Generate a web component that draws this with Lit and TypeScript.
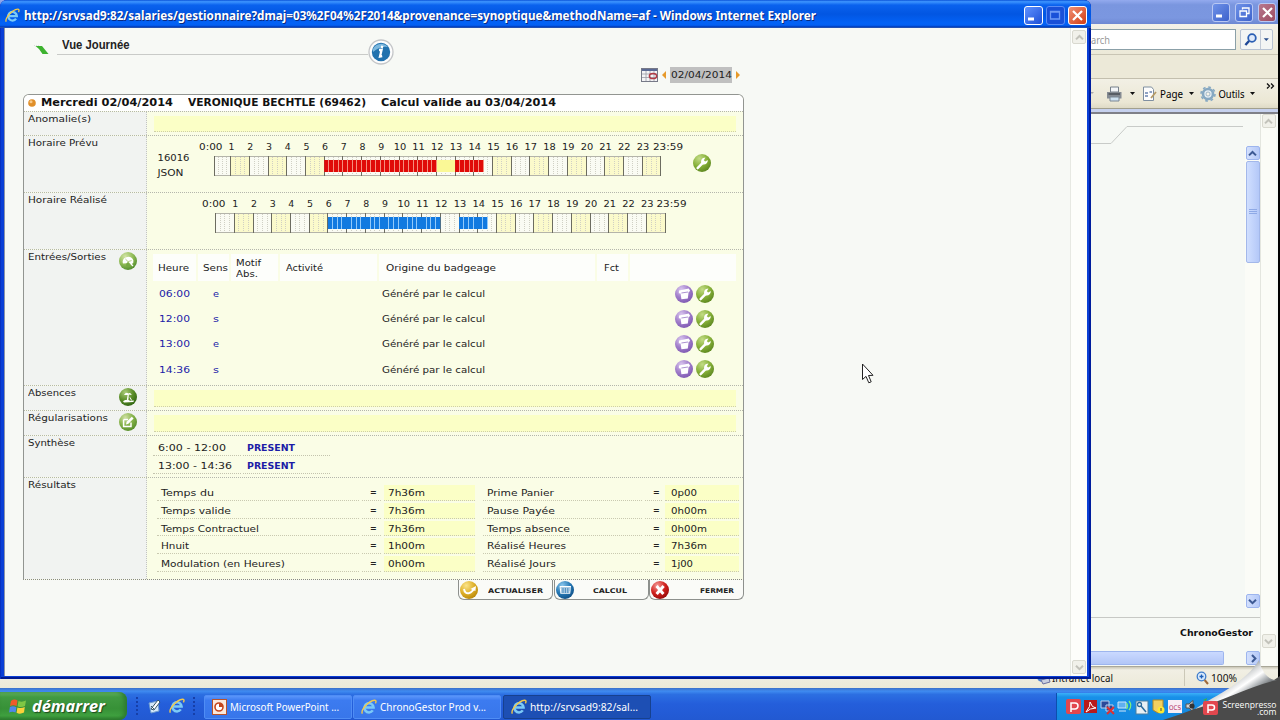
import { LitElement, html, svg, css } from "lit";
import { customElement, property } from "lit/decorators.js";

/* Text stretched horizontally so that it spans a given width. */
@customElement("fit-text")
class FitText extends LitElement {
  @property({ type: Number }) w = 0;
  @property() text = "";
  static styles = css`
    :host { display: inline-block; white-space: nowrap; }
    .t { display: inline-block; transform-origin: 0 50%; }
  `;
  render() {
    return html`<span class="t">${this.text}</span>`;
  }
  updated() {
    const el = this.renderRoot.querySelector(".t") as HTMLElement;
    el.style.transform = "none";
    const natural = el.getBoundingClientRect().width;
    el.style.transform = `scaleX(${(this.w / natural).toFixed(4)})`;
    this.style.width = this.w + "px";
  }
}

const fit = (text: string, w: number, cls = "") =>
  html`<fit-text class=${cls} .text=${text} .w=${w}></fit-text>`;

const ball = (id: string, a: string, b: string, c: string) => svg`
  <defs><radialGradient id=${id} cx="0.35" cy="0.25" r="0.8">
    <stop offset="0" stop-color=${a}/><stop offset="0.55" stop-color=${b}/><stop offset="1" stop-color=${c}/>
  </radialGradient></defs>
  <circle cx="9" cy="9" r="9" fill=${`url(#${id})`}/>`;

const wrench = svg`${ball("gw", "#c3dc86", "#86b038", "#5c8620")}
  <path d="M4.6 14.2 L10 8.6" stroke="#fff" stroke-width="2.4" fill="none" stroke-linecap="round"/>
  <path d="M8.4 9.4 C7.4 6.6 9 3.6 12.4 3.6 L10.8 6.2 L12.2 7.6 L14.8 6 C15 9 12.6 11 9.6 10.4Z" fill="#fff"/>`;
const trash = svg`${ball("pt", "#d9c6ee", "#a07cca", "#7e58b2")}
  <path d="M4 5.400 L13.800 3.600 L15.200 6 L13.600 7 L12.800 13.600 L6.400 14.200 L5.600 8.600 L3.800 8.200Z" fill="#fff"/>
  <path d="M6.400 8 L13 7" stroke="#a184cc" stroke-width="0.9"/>`;
const clock = svg`${ball("gc", "#d3e4a6", "#8fbb55", "#4e8a2a")}
  <path d="M3.600 10 A5.600 5.600 0 0 1 14.400 8.400 L14.200 11 L12 12.600 L9 9.600 L7.600 11.200 L4 11.600Z" fill="#fff"/>
  <path d="M6.400 7 L9 9.600 L12.600 8.600" stroke="#b6d088" stroke-width="1" fill="none"/>
  <path d="M7.400 11.400 L9.200 10.400 L12 14.600 Q9 15.600 7 14Z" fill="#76a844"/><path d="M12 12 L14 14" stroke="#fff" stroke-width="1.200"/>`;
const palm = svg`${ball("gp", "#a9cb77", "#5b8d29", "#2f6412")}
  <path d="M5 7 Q7 3.6 9.4 5.4 Q11.4 4.2 12.8 7 L9.8 6.6 L9.4 12 L7.8 12 L8.6 7Z M4 13.2 Q8 10.6 11 12.8 L15 12.4 L14.4 14 L5 14.4Z" fill="#fff"/>
  <path d="M11 9.4 L12.6 12.4" stroke="#fff" stroke-width="1"/>`;
const pencil = svg`${ball("ge", "#cfe0a2", "#85b249", "#548c28")}
  <path d="M4.6 6.4 H9 M4.6 6.4 V13.6 H12 V9.6" stroke="#fff" stroke-width="1.5" fill="none"/>
  <path d="M7 11.4 L7.6 8.8 L12.8 3.8 L14.6 5.6 L9.4 10.8Z" fill="#fff"/>`;
const refresh = svg`${ball("yr", "#fbe48a", "#deb02a", "#b98708")}
  <path d="M4 8 Q4.800 13 9 12.200 Q12 11.400 14 7.600" stroke="#fff" stroke-width="1.900" fill="none"/>
  <path d="M10.400 8 L16 5 L15.400 10Z" fill="#fff"/>`;
const calc = svg`${ball("bc", "#8cc8ee", "#2678b4", "#0f4f86")}
  <path d="M3.600 5 H15 L14.200 12.800 H4.400Z" fill="#fff"/>
  <path d="M4.600 7 H14.400 M5 9 H14 M5 11 H13.600 M7 7 V12 M9.400 7 V12 M11.800 7 V12" stroke="#2e7cb6" stroke-width="0.8"/>`;
const cross = svg`${ball("rx", "#f49a96", "#d0201c", "#940a0a")}
  <path d="M5.600 5 L12.400 13 M12.600 5 L5.600 13" stroke="#fff" stroke-width="3"/>`;

const icon = (g: unknown, size = 18) =>
  html`<svg class="ic" width=${size} height=${size} viewBox="0 0 18 18">${g}</svg>`;

const ie = (s: number) => html`<svg class="ic" width=${s} height=${s} viewBox="0 0 16 16">
  <path d="M3.8 8.6 H12.6 A4.6 4.6 0 1 0 11.8 11.4" fill="none" stroke="#7ccaf7" stroke-width="2.5"/>
  <path d="M1.4 14.6 C-0.6 11.6 7 2 13.6 1.2 C15.4 1 15.2 3 14.4 4.4" fill="none" stroke="#f3c94b" stroke-width="1.4"/></svg>`;

const chevron = (d: string, color: string) =>
  html`<svg width="9" height="9" viewBox="0 0 9 9"><path d=${d} fill="none" stroke=${color} stroke-width="2"/></svg>`;
const UP = "M1 6.4 L4.5 3 L8 6.4", DOWN = "M1 2.8 L4.5 6.2 L8 2.8", RIGHT = "M3 1 L6.4 4.5 L3 8";

interface Scale { top: number; zero: number; one: number; step: number; plan: boolean; color: string; light: string; start: number; end: number; }

const snap = (v: number) => Math.floor(v) + 0.5;

const timeline = (s: Scale) => {
  const x = (h: number) => (h < 1 ? s.zero + (s.one - s.zero) * h : s.one + s.step * (h - 1));
  const y = s.top;
  const hours = Array.from({ length: 24 }, (_, i) => i);
  const block = (a: number, b: number) => svg`
    <rect x=${x(a)} y=${y + 4} width=${x(b) - x(a)} height="12" fill=${s.color}/>
    ${Array.from({ length: Math.floor((b - a) * 4) }, (_, i) => i + 1).filter((i) => s.plan || i % 4 !== 0)
      .map((i) => snap(x(a) + i * s.step / 4)).map((q) => svg`<line x1=${q} x2=${q} y1=${y + 4} y2=${y + 16} stroke=${s.light} stroke-width="1"/>`)}`;
  return svg`
    <rect x=${s.zero} y=${y} width=${x(24) - s.zero} height="19" fill="#fafbf3"/>
    ${hours.filter((h) => h % 2 === 1 && (h < 6 || h > 14)).map((h) => svg`<rect x=${x(h)} y=${y} width=${s.step} height="19" fill="#fbfacb"/>`)}
    ${hours.flatMap((h) => [1, 2, 3].map((q) => snap(x(h + q / 4)))).map((q) => svg`<line x1=${q} x2=${q} y1=${y + 1} y2=${y + 19} stroke="#d0d0c4" stroke-width="1" stroke-dasharray="1 1"/>`)}
    <path d=${`M${s.zero} ${y + 0.5} H${x(24)} M${s.zero} ${y + 19.5} H${x(24)}`} stroke="#b4b4aa" fill="none"/>
    ${[...hours, 24].map((h) => snap(x(h))).map((q) => svg`<line x1=${q} x2=${q} y1=${y} y2=${y + 20} stroke="#6c6c60" stroke-width="1"/>`)}
    ${s.plan ? svg`<rect x=${x(12)} y=${y + 4} width=${s.step} height="12" fill="#faf896"/>` : ""}
    ${block(6, 12)}${block(13, 14.5)}
    <text class="num" x=${s.start} y=${y - 6} textLength="23.5" lengthAdjust="spacingAndGlyphs">0:00</text>
    ${hours.slice(1).map((h) => svg`<text class="num mid" x=${x(h) + 0.9} y=${y - 6} textLength=${h > 9 ? 12.5 : 6} lengthAdjust="spacingAndGlyphs">${h}</text>`)}
    <text class="num" x=${s.end} y=${y - 6} textLength="30" lengthAdjust="spacingAndGlyphs">23:59</text>`;
};

const BADGES = [["06:00", "e"], ["12:00", "s"], ["13:00", "e"], ["14:36", "s"]];
const RESULTS: [string, number, string, number, string, number, string, number][] = [
  ["Temps du", 53, "7h36m", 37, "Prime Panier", 67, "0p00", 26],
  ["Temps valide", 70, "7h36m", 37, "Pause Payée", 68, "0h00m", 36],
  ["Temps Contractuel", 98, "7h36m", 37, "Temps absence", 83, "0h00m", 36],
  ["Hnuit", 28, "1h00m", 37, "Réalisé Heures", 79, "7h36m", 36],
  ["Modulation (en Heures)", 124, "0h00m", 37, "Réalisé Jours", 69, "1j00", 22],
];

@customElement("app-root")
class AppRoot extends LitElement {
  static styles = css`
    :host { display: block; position: relative; width: 1280px; height: 720px; overflow: hidden; background: #000;
      font-family: "DejaVu Sans", sans-serif; font-size: 9px; line-height: 12px; color: #222; }
    * { box-sizing: border-box; }
    svg { display: block; flex: none; }
    .row { display: flex; align-items: center; }
    .end { justify-content: flex-end; }
    .ui { font-family: "Noto Sans", sans-serif; }

    /* main browser window */
    .back { position: absolute; left: 0; top: 0; width: 1278px; height: 688px; background: #ece9d8; display: flex; flex-direction: column; }
    .btitle { height: 24px; background: linear-gradient(#93aaee, #7a96df 20%, #7b97e0 75%, #6d88d2); gap: 5px; padding-right: 2px; }
    .wb { width: 18px; height: 19px; border: 1px solid #b9c8f3; border-radius: 3px; background: linear-gradient(135deg, #6f92e8, #3d62cc); display: grid; place-items: center; }
    .wb.red { background: linear-gradient(135deg, #b8788e, #9c4c62); }
    .search { height: 31px; padding-right: 5px; gap: 4px; border-bottom: 1px solid #c9c5b4; background: linear-gradient(#f3f1e8, #ece9d8); }
    .field { width: 158px; height: 21px; background: #fff; border: 1px solid #8ba0a8; padding-left: 12px; font-size: 11px; line-height: 20px; color: #999; }
    .sbtn { width: 33px; height: 21px; border: 1px solid #b7c2d2; border-radius: 2px; background: #f3f5f4; }
    .sbtn svg + svg { border-left: 1px solid #c2cad6; }
    .tabs { height: 24px; border-bottom: 1px solid #c3bfae; }
    .cmd { height: 29px; padding-right: 2px; background: linear-gradient(#f2f0e5, #ebe7d4 80%, #dedac6); color: #111; font-size: 11px; }
    .rule { height: 6px; background: linear-gradient(#a2a08e 0 1px, #c6d1ee 1px 4px, #7f8088 4px); }
    .view { flex: 1; display: flex; justify-content: flex-end; background: #f6f9f5; padding-right: 2px; }
    .frame { width: 171px; display: flex; flex-direction: column; }
    .doc { flex: 1; display: flex; }
    .doc .page { flex: 1; }
    .vbar { width: 15px; background: #fbfcf7; display: flex; flex-direction: column; align-items: center; }
    .vbar.outer { border-left: 1px solid #e4e6df; width: 16px; }
    .inner { margin-top: 32px; }
    .sb { width: 14px; height: 14px; background: linear-gradient(90deg, #d3e0fd, #b5c9f8); border: 1px solid #9db5ee; border-radius: 2px; display: grid; place-items: center; flex: none; }
    .sb.off { background: #f1f1ea; border-color: #d9d9cf; }
    .thumb { width: 14px; height: 102px; margin-top: 1px; background: linear-gradient(90deg, #d0dfff, #b4c8f8); border: 1px solid #a3b8ea; border-radius: 2px; display: grid; place-items: center; }
    .grow { flex: 1; }
    .foot { height: 33px; border-top: 1px solid #c7c9c5; padding-right: 7px; justify-content: flex-end; font-weight: bold; font-size: 9.5px; color: #111; padding-bottom: 3px; }
    .hbar { height: 16px; }
    .hthumb { width: 135px; height: 14px; border: 1px solid #9db5ee; border-left: 0; border-radius: 0 2px 2px 0; background: linear-gradient(#cad9ff, #b2c6f7); }
    .status { height: 22px; background: linear-gradient(#c9c6b6, #f1efe4 3px, #ece9d8); border-top: 1px solid #a9a798; padding-left: 1036px; color: #111; font-size: 10.5px; }
    .status .sep { width: 1px; height: 17px; background: #cbc8b8; margin: 0 11px 0 71px; }
    .zoom { margin-left: 2px; }

    /* pop-up window */
    .front { position: absolute; left: 0; top: 0; width: 1091px; height: 679px; border-radius: 7px 7px 0 0; background: #0a3fd6; padding: 0 4px 3px 4px; display: flex; flex-direction: column; box-shadow: inset 1px 0 #0831c0, inset -2px 0 #001e9e, inset 0 -2px #001a90; overflow: hidden; }
    .title { height: 28px; margin: 0 -4px; padding: 3px 3px 0 5px; background: linear-gradient(#0b53d8, #3d95ff 6%, #0a62ee 18%, #0256e2 50%, #0362f6 82%, #0460f2 90%, #0037b4 97%, #5577b0); gap: 2px; color: #fff; font-weight: bold; font-size: 12px; text-shadow: 1px 1px 0 #0a2a80; }
    .title fit-text { margin-left: 2px; }
    .title .wb { border-color: #fff; width: 19px; background: linear-gradient(135deg, #5f92ff, #1d4fd6); margin: -1px 1px 0 0; }
    .title .wb.dim { border-color: #5a8cf5; background: #1950d8; }
    .title .wb.red { background: linear-gradient(135deg, #f09074, #d23c14); }
    .client { flex: 1; display: flex; background: #f7f9f5; border-left: 1px solid #8b95a8; }
    .popbar { width: 17px; border-left: 1px solid #e7e9e3; background: #fdfefb; display: flex; flex-direction: column; align-items: center; padding: 2px 0 2px; }
    .main { flex: 1; padding-left: 18px; }
    .head { display: flex; height: 38px; align-items: flex-start; padding-left: 6px; }
    .mark { margin: 17px 5px 0 5px; }
    .headline { width: 311px; height: 27px; margin-left: 3px; padding: 10px 0 0 5px; border-bottom: 1px solid #c9cbc8; font: bold 12px/14px "Liberation Sans", sans-serif; color: #222; }
    .info { margin-top: 11px; }
    .daterow { width: 719px; height: 17px; padding-right: 2px; margin-bottom: 11px; gap: 4px; }
    .date { background: #c0c0c0; height: 16px; width: 62px; padding: 2px 0 0 1px; }

    /* card */
    .card { width: 721px; }
    .panel { border: 1px solid #929591; border-radius: 6px 6px 0 0; height: 486px; border-bottom: 1px dotted #888; display: flex; flex-direction: column; background: #fafde6; overflow: hidden; }
    .ptitle { height: 16px; background: #fff; font-weight: bold; font-size: 10px; color: #111; padding-left: 4px; gap: 5px; }
    .ptitle .gap { margin-left: 10px; }
    .line { display: grid; grid-template-columns: 123px 1fr; border-top: 1px dotted #b4b6ac; }
    .label { background: #f1f3f1; border-right: 1px dotted #c3c5c0; padding: 0 9px 0 4px; display: flex; justify-content: space-between; align-items: flex-start; }
    .label fit-text { margin-top: 0.5px; }
    .label .ic { margin-top: 2px; }
    .h25 { height: 25px; } .h24 { height: 24px; } .h57 { height: 57px; } .h136 { height: 136px; } .h42 { height: 42px; }
    .fill { background: #fbffc6; border-bottom: 1px dotted #cfcfa8; margin: 4px 7px 3px 7px; }
    .num { font-size: 9px; fill: #222; } .mid { text-anchor: middle; }
    .es { padding: 4px 7px 0 6px; }
    .hd, .bd { display: grid; grid-template-columns: 43px 31px 47px 97px 216px 31px 1fr; column-gap: 2px; }
    .hd { height: 27px; }
    .hd > div { background: #fdfefb; display: flex; align-items: center; padding: 2px 0 0 5px; line-height: 11px; }
    .hd > .motif { flex-direction: column; justify-content: center; align-items: flex-start; }
    .hd > .act { padding-left: 6px; } .hd > .org { padding-left: 7px; } .hd > .fct { padding-left: 7px; }
    .bd { height: 25.2px; align-items: center; padding-left: 6px; color: #2222a8; }
    .bd fit-text { margin-top: 1px; }
    .bd .org { color: #222; margin-left: -3px; }
    .bd .sens { padding-left: 9px; }
    .acts { display: flex; gap: 3px; padding-left: 39px; }
    .syn { display: grid; grid-template-columns: 88px 87px; grid-auto-rows: 17px; row-gap: 1px; column-gap: 2px; padding: 3px 0 0 6px; align-content: start; }
    .syn > div { border-bottom: 1px dotted #c4c4ae; padding: 3px 0 0 5px; }
    .syn .p { font-weight: bold; color: #1c1ca6; padding-left: 4px; }
    .res { display: grid; grid-template-columns: 202px 19px 91px 164px 17px 74px; grid-auto-rows: 15.8px; row-gap: 2px; padding: 7px 0 0 10px; align-content: start; column-gap: 3px; }
    .res > div { border-bottom: 1px dotted #c9c9b0; padding: 2px 0 0 4px; }
    .res > .eq { padding-left: 8px; font-weight: bold; font-size: 8px; } .res > .val { background: #fbffc6; } .res > .b { margin-left: 5px; } .res > .v2 { padding-left: 6px; }
    .btns { display: flex; justify-content: flex-end; }
    .btn { width: 95px; height: 20px; border: 1px solid #8d908d; border-top: 0; border-radius: 0 0 6px 6px; display: flex; align-items: flex-start; background: #fafbf8; font-weight: bold; font-size: 6.5px; color: #222; margin-left: 0.5px; padding: 1px 9px 0 1px; justify-content: space-between; }
    .btn fit-text { margin-top: 4px; }
    .btn.c { padding-right: 21px; }

    /* taskbar */
    .task { position: absolute; left: 0; top: 688px; width: 1280px; height: 32px; background: linear-gradient(#3c6fc9, #3f8bf0 10%, #2c6fe2 20%, #245edb 50%, #2259d2); display: flex; align-items: flex-end; }
    .start { width: 127px; height: 28px; border-radius: 0 8px 8px 0; background: linear-gradient(#6cbb66, #419a41 18%, #379137 60%, #3fa03f 85%, #2b7a2b); color: #fff; font-family: "Open Sans", sans-serif; font-style: italic; font-weight: bold; font-size: 16.5px; gap: 4px; padding-left: 9px; text-shadow: 1px 1px 1px #1d4a1d; line-height: 20px; box-shadow: inset -3px 0 4px #2d7a30; }
    .start fit-text { margin-top: -1px; }
    .quick { width: 77px; height: 28px; padding-left: 9px; gap: 8px; }
    .dots { width: 3px; height: 18px; border-left: 2px dotted #163fa8; }
    .tb { width: 148px; height: 24px; margin: 0 1px 1px 0; border: 1px solid #4f8df5; border-radius: 2px; background: linear-gradient(#5a95fa, #3c7bf0 20%, #3876ea); color: #fff; padding-left: 7px; gap: 3px; font-size: 11px; }
    .tb.on { background: #1d4fb4; border-color: #17418f; margin-left: 1px; }
    .tray { width: 224px; height: 27px; margin-left: auto; background: linear-gradient(#3cb0f8, #1890e8 15%, #1288e0); border-left: 1px solid #0d4fae; padding-left: 9px; gap: 4px; }
    .curl { position: absolute; left: 1160px; top: 656px; }
    .cursor { position: absolute; left: 861px; top: 363px; }
    .sp { font: 9px "Open Sans", sans-serif; fill: #fff; }
    .sp.small { font-size: 8.5px; }
  `;

  row(h: string, label: string, w: number, body: unknown, ic: unknown = "") {
    return html`<div class="line ${h}"><div class="label">${fit(label, w)}${ic}</div>${body}</div>`;
  }

  render() {
    const min = html`<svg width="13" height="13" viewBox="0 0 13 13"><path d="M1 10 H7" stroke="#fff" stroke-width="3"/></svg>`;
    const x = html`<svg width="13" height="13" viewBox="0 0 13 13"><path d="M2 2 L11 11 M11 2 L2 11" stroke="#fff" stroke-width="2.2"/></svg>`;
    return html`
      <div class="back">
        <div class="btitle row end">
          <div class="wb">${min}</div>
          <div class="wb"><svg width="13" height="13" viewBox="0 0 13 13"><path d="M4.5 3.5 V1.8 H11 V7.5 H9 M4 2 H11.5 M2 5 H8.5 V10.5 H2Z" fill="none" stroke="#fff" stroke-width="1.3"/></svg></div>
          <div class="wb red">${x}</div>
        </div>
        <div class="search row end">
          <div class="field ui">${fit("arch", 19)}</div>
          <div class="sbtn row">
            <svg width="19" height="19" viewBox="0 0 19 19"><circle cx="11" cy="8" r="3.8" fill="#dfeafa" stroke="#2b5fb4" stroke-width="1.8"/><path d="M8 11 L4.4 15" stroke="#1e4796" stroke-width="2.4"/></svg>
            <svg width="12" height="19" viewBox="0 0 12 19"><path d="M3 8 H8.6 L5.8 11Z" fill="#2b4f8c"/></svg>
          </div>
        </div>
        <div class="tabs"></div>
        <div class="cmd ui row end">
          <svg width="186" height="28" viewBox="1090 80 186 28">
            <path d="M1090 92 h4 l-2 2z" fill="#aaa"/>
            <path d="M1110.500 87 h8 v5 h-8z" fill="#f4f6f8" stroke="#77808a"/><path d="M1107 92 h14.500 v6.500 h-14.500z" fill="#858b92"/><path d="M1108.500 94 h11.500" stroke="#454b52" stroke-width="1.4"/><path d="M1110 97 h9 v4 h-9z" fill="#cfe2f0" stroke="#7a8794"/>
            <path d="M1130 92 h5 l-2.500 3z" fill="#111"/>
            <path d="M1143.500 87 h8 l2 2.500 v11 h-10z" fill="#fdfdfd" stroke="#7f8fa0"/><path d="M1145 93 h3 M1145 96 h3 M1149.500 92 h2.500" stroke="#6a83b0" stroke-width="1.5"/><path d="M1151 98 l5 -6" stroke="#b59a66" stroke-width="1.8"/>
            <path d="M1189 92 h5 l-2.500 3z" fill="#111"/>
            <circle cx="1208" cy="94" r="5" fill="#e6eef3" stroke="#86a8c2" stroke-width="2.600"/><circle cx="1208" cy="94" r="7" fill="none" stroke="#86a8c2" stroke-width="1.600" stroke-dasharray="2.750 2.750"/><circle cx="1208" cy="94" r="2" fill="#f6f3ea" stroke="#7293ae" stroke-width=".6"/>
            <path d="M1250 92 h5 l-2.500 3z" fill="#111"/>
            <path d="M1267 83.500 l2.500 2.500 l-2.500 2.500 M1271 83.500 l2.500 2.500 l-2.500 2.500" fill="none" stroke="#111" stroke-width="1.300"/>
            <text x="1160" y="97.500" textLength="23" lengthAdjust="spacingAndGlyphs">Page</text><text x="1218.500" y="97.500" textLength="26" lengthAdjust="spacingAndGlyphs">Outils</text>
          </svg>
        </div>
        <div class="rule"></div>
        <div class="view">
          <div class="frame">
            <div class="doc">
              <div class="page"><svg width="156" height="40" viewBox="0 0 156 40"><path d="M0 29.500 H22 L38 12.500 H154" fill="none" stroke="#c8cbc8"/></svg></div>
              <div class="vbar inner"><div class="sb">${chevron(UP, "#3d5a94")}</div><div class="thumb"><svg width="8" height="8"><path d="M0 1.500 H8 M0 3.500 H8 M0 5.500 H8" stroke="#8ea9e6"/></svg></div><div class="grow"></div><div class="sb">${chevron(DOWN, "#3d5a94")}</div></div>
            </div>
            <svg width="1" height="9"></svg>
            <div class="foot row">${fit("ChronoGestor", 73)}</div>
            <div class="hbar row"><div class="hthumb"></div><div class="grow"></div><div class="sb">${chevron(RIGHT, "#3d5a94")}</div></div>
          </div>
          <div class="vbar outer"><div class="sb off">${chevron(UP, "#c2c2ba")}</div><div class="grow"></div><div class="sb off">${chevron(DOWN, "#c2c2ba")}</div><svg width="1" height="18"></svg></div>
        </div>
        <div class="status ui row">
          <svg width="16" height="16" viewBox="0 0 16 16"><circle cx="6" cy="7" r="5" fill="#4a7fd0"/><path d="M5 10 L13 8 L14 12 L7 14Z" fill="#c9cfe0" stroke="#6a6fa0"/></svg>
          ${fit("Intranet local", 61)}
          <div class="sep"></div>
          <svg width="13" height="14" viewBox="0 0 13 14"><circle cx="5.500" cy="5.500" r="4.300" fill="#d8eafc" stroke="#3f7dcc" stroke-width="1.300"/><path d="M3.500 5.500 H7.500 M5.500 3.500 V7.500" stroke="#1d5fb8" stroke-width="1.300"/><path d="M8.600 9 L12 13" stroke="#a06a3a" stroke-width="2"/></svg>
          ${fit("100%", 26, "zoom")}
        </div>
      </div>

      <div class="front">
        <div class="title ui row">
          ${ie(15)}
          ${fit("http://srvsad9:82/salaries/gestionnaire?dmaj=03%2F04%2F2014&provenance=synoptique&methodName=af - Windows Internet Explorer", 792)}
          <div class="grow"></div>
          <div class="wb">${min}</div>
          <div class="wb dim"><svg width="13" height="13" viewBox="0 0 13 13"><path d="M1.500 2.500 H10.500 V10 H1.500Z M1 3 H11" fill="none" stroke="#6f9af5" stroke-width="1.300"/></svg></div>
          <div class="wb red">${x}</div>
        </div>
        <div class="client">
          <div class="main">
            <div class="head">
              <svg class="mark" width="15" height="10" viewBox="0 0 15 10"><path d="M0 .5 H6" stroke="#ddd" stroke-dasharray="1 1"/><path d="M1.500 1 H8 L14.500 9 H8.500 L5 4Z" fill="#3db32f"/></svg>
              <div class="headline">${fit("Vue Journée", 67.5)}</div>
              <svg class="info" width="26" height="26" viewBox="0 0 26 26"><circle cx="13" cy="13" r="12" fill="#fdfdfd" stroke="#c4c6c8" stroke-width="1.300"/><circle cx="13" cy="13" r="9.200" fill="#2272ae"/><path d="M5 10 A9 9 0 0 1 20 8 Q12 7 5 13Z" fill="#7db8de"/><path d="M14.300 6.800 L13.700 9 M11 11 L13.600 10.800 L12 17.600 L14.200 17.200" fill="none" stroke="#fff" stroke-width="2.300"/></svg>
            </div>
            <div class="daterow row end">
              <svg width="17" height="14" viewBox="0 0 17 14"><rect x=".5" y=".5" width="16" height="13" fill="#f4f4f6" stroke="#777a88"/><path d="M1 2 H16" stroke="#5b6a94" stroke-width="2"/><path d="M1 6 H16 M1 9.500 H16 M5 3 V13 M9 3 V13 M13 3 V13" stroke="#9a9ca6" stroke-width=".8"/><ellipse cx="12" cy="8" rx="3.600" ry="2.600" fill="none" stroke="#b23a44" stroke-width="1.500"/></svg>
              <svg width="4" height="8" viewBox="0 0 4 8"><path d="M4 0 V8 L0 4Z" fill="#e79a2b"/></svg>
              <div class="date">${fit("02/04/2014", 61)}</div>
              <svg width="4" height="8" viewBox="0 0 4 8"><path d="M0 0 V8 L4 4Z" fill="#e79a2b"/></svg>
            </div>
            <div class="card">
              <div class="panel">
                <div class="ptitle row">
                  <svg width="8" height="8" viewBox="0 0 8 8"><circle cx="4" cy="4" r="3.800" fill="#e08f2a"/><circle cx="3" cy="2.800" r="1.500" fill="#f8c98a"/></svg>
                  ${fit("Mercredi 02/04/2014", 132)}${fit("VERONIQUE BECHTLE (69462)", 178, "gap")}${fit("Calcul valide au 03/04/2014", 175, "gap")}
                </div>
                ${this.row("h24", "Anomalie(s)", 63, html`<div class="fill"></div>`)}
                ${this.row("h57", "Horaire Prévu", 70, html`<svg width="595" height="56" viewBox="147 136 595 56">
                  <text class="num" x="157.500" y="160.500" textLength="32" lengthAdjust="spacingAndGlyphs">16016</text><text class="num" x="157.500" y="175.500" textLength="26" lengthAdjust="spacingAndGlyphs">JSON</text>
                  ${timeline({ top: 156, zero: 214.5, one: 230.7, step: 18.7, plan: true, color: "#e00a08", light: "#f58d7c", start: 199, end: 653 })}
                  <svg x="693" y="154" width="18" height="18" viewBox="0 0 18 18">${wrench}</svg></svg>`)}
                ${this.row("h57", "Horaire Réalisé", 79, html`<svg width="595" height="56" viewBox="147 193 595 56">
                  ${timeline({ top: 213, zero: 215.5, one: 234.3, step: 18.73, plan: false, color: "#127ae0", light: "#92cafb", start: 202, end: 656.5 })}</svg>`)}
                ${this.row("h136", "Entrées/Sorties", 78, html`<div class="es">
                  <div class="hd"><div>${fit("Heure", 31)}</div><div>${fit("Sens", 25)}</div><div class="motif">${fit("Motif", 25)}${fit("Abs.", 22)}</div><div class="act">${fit("Activité", 37)}</div><div class="org">${fit("Origine du badgeage", 110)}</div><div class="fct">${fit("Fct", 15)}</div><div></div></div>
                  ${BADGES.map(([t, s]) => html`<div class="bd"><div>${fit(t, 31)}</div><div class="sens">${fit(s, 6)}</div><div></div><div></div><div class="org">${fit("Généré par le calcul", 103)}</div><div></div><div class="acts">${icon(trash)}${icon(wrench)}</div></div>`)}
                </div>`, icon(clock))}
                ${this.row("h25", "Absences", 48, html`<div class="fill"></div>`, icon(palm))}
                ${this.row("h25", "Régularisations", 80, html`<div class="fill"></div>`, icon(pencil))}
                ${this.row("h42", "Synthèse", 47, html`<div class="syn"><div>${fit("6:00 - 12:00", 68)}</div><div class="p">${fit("PRESENT", 48)}</div><div>${fit("13:00 - 14:36", 74)}</div><div class="p">${fit("PRESENT", 48)}</div></div>`)}
                ${this.row("grow", "Résultats", 48, html`<div class="res">${RESULTS.map((r) => html`
                  <div>${fit(r[0], r[1])}</div><div class="eq">=</div><div class="val">${fit(r[2], r[3])}</div>
                  <div class="b">${fit(r[4], r[5])}</div><div class="eq">=</div><div class="val v2">${fit(r[6], r[7])}</div>`)}</div>`)}
              </div>
              <div class="btns">
                <div class="btn">${icon(refresh)}${fit("ACTUALISER", 55)}</div>
                <div class="btn c">${icon(calc)}${fit("CALCUL", 34)}</div>
                <div class="btn">${icon(cross)}${fit("FERMER", 34)}</div>
              </div>
            </div>
          </div>
          <div class="popbar"><div class="sb off">${chevron(UP, "#c2c2ba")}</div><div class="grow"></div><div class="sb off">${chevron(DOWN, "#c2c2ba")}</div></div>
        </div>
      </div>

      <div class="task">
        <div class="start row">
          <svg width="19" height="19" viewBox="0 0 19 19"><path d="M2 4 Q5 1.500 8.500 3.500 L7.600 9 Q4.500 7.500 1 9Z" fill="#ee5a2a"/><path d="M9.500 4 Q13 5.500 17 3.500 L16 9 Q12 11 8.600 9.200Z" fill="#7fc744"/><path d="M.9 10 Q4 8.500 7.400 10.200 L6.600 15.600 Q3.400 14 0 15.600Z" fill="#4f86ea"/><path d="M8.400 10.400 Q12 12 15.800 10 L15 15.600 Q11 17.600 7.600 15.800Z" fill="#fbd13a"/></svg>
          ${fit("démarrer", 73)}
        </div>
        <div class="quick row"><div class="dots"></div>
          <svg width="14" height="16" viewBox="0 0 14 16"><path d="M2 5 L11 3 L12 13 L4 15Z" fill="#d4e8fa" stroke="#6f9cd0"/><path d="M4 11 L11 2 L13 4 L7 12Z" fill="#fff" stroke="#356"/><path d="M4 8 L7 11" stroke="#356"/></svg>
          ${ie(16)}<div class="dots"></div></div>
        <div class="tb ui row"><svg width="15" height="16" viewBox="0 0 15 16"><rect x=".5" y=".5" width="14" height="15" fill="#fbe9dc" stroke="#b8522c"/><circle cx="7" cy="8" r="4" fill="#fff" stroke="#c4451c" stroke-width="1.600"/><path d="M7 8 V4 A4 4 0 0 1 11 8Z" fill="#c4451c"/></svg>${fit("Microsoft PowerPoint ...", 109)}</div>
        <div class="tb ui row">${ie(16)}${fit("ChronoGestor Prod v...", 106)}</div>
        <div class="tb on ui row">${ie(16)}${fit("http://srvsad9:82/sal...", 108)}</div>
        <div class="tray row">
          <svg width="160" height="16" viewBox="1066 698 160 16">
            <rect x="1066" y="698" width="15" height="15" rx="2" fill="#e2474e"/><path d="M1071 711 V702 H1075 A2.800 2.800 0 0 1 1075 708 H1071" fill="none" stroke="#fff" stroke-width="1.500"/>
            <rect x="1084" y="699" width="13" height="13" fill="#b81a1a"/><path d="M1086 711 Q1091 705 1090 701 Q1092 707 1096 707 Q1090 707 1086 711" fill="none" stroke="#fff"/>
            <path d="M1101 700 h8 v7 h-8z M1106 704 h7 v6 h-7z" fill="#2b4a9a" stroke="#bcd2f0"/><path d="M1107 706 l7 7 M1114 706 l-7 7" stroke="#e03030" stroke-width="2"/>
            <path d="M1118 701 h8 v6 h-8z M1119 710 h7" fill="#5fb0f0" stroke="#cfe6fa"/><path d="M1126.500 702 q2 3 0 6 M1129 700 q3.500 4.500 0 9" fill="none" stroke="#7ff07a" stroke-width="1.300"/>
            <rect x="1136" y="700" width="12" height="13" fill="#e8f0f4" stroke="#4a7fa0"/><circle cx="1139.500" cy="703.500" r="2" fill="none" stroke="#2b6a9a" stroke-width="1.300"/><path d="M1141 705 L1146 711" stroke="#2b6a9a" stroke-width="1.500"/>
            <path d="M1153 699 h10 v10 l-5 3 l-5 -3z" fill="#f2d060" stroke="#b48a20"/><circle cx="1161" cy="709" r="3.500" fill="#ffe930"/><path d="M1161 707 v3" stroke="#444"/>
            <rect x="1168" y="699" width="14" height="13" fill="#f8eef4"/><text x="1169" y="708.500" font-size="6.500" fill="#b0306a" textLength="12" lengthAdjust="spacingAndGlyphs">OCS</text>
            <path d="M1186 703 h3 l4 -3.500 v11 l-4 -3.500 h-3z" fill="#cfd4d8" stroke="#555"/><circle cx="1192" cy="705" r="2.600" fill="#333"/>
          </svg>
        </div>
      </div>

      <svg class="curl" width="120" height="64" viewBox="1160 656 120 64">
        <defs><linearGradient id="cg" gradientUnits="userSpaceOnUse" x1="1228" y1="678" x2="1243" y2="700"><stop offset="0" stop-color="#8a9094"/><stop offset="0.300" stop-color="#d8dadb"/><stop offset="0.550" stop-color="#ffffff"/><stop offset="0.800" stop-color="#b4b8bb"/><stop offset="1" stop-color="#7c8083"/></linearGradient></defs>
        <path d="M1280 676 L1274 680 C1250 682 1215 704 1163 720 H1280Z" fill="#4b4b4b"/>
        <path d="M1195 709 C1218 694 1246 682 1259 660 C1261 670 1268 681 1277 680 C1250 686 1225 700 1195 709Z" fill="url(#cg)"/>
        <path d="M1203 700 l4 -2 l-1 3z" fill="#3cb043"/>
        <rect x="1203" y="701" width="15" height="14" rx="2" fill="#e2474e"/><path d="M1208 713 V705 H1212 A2.500 2.500 0 0 1 1212 710 H1208" fill="none" stroke="#fff" stroke-width="1.500"/>
        <text class="sp" x="1222.500" y="707.500" textLength="54" lengthAdjust="spacingAndGlyphs">Screenpresso</text>
        <text class="sp small" x="1257" y="715" textLength="19.500" lengthAdjust="spacingAndGlyphs">.com</text>
      </svg>
      <svg class="cursor" width="13" height="22" viewBox="0 0 13 22"><path d="M1.500 1 V16.500 L5 13.400 L7.800 19.800 L10.200 18.800 L7.500 12.500 L12 12.300Z" fill="#fff" stroke="#222"/></svg>
    `;
  }
}
